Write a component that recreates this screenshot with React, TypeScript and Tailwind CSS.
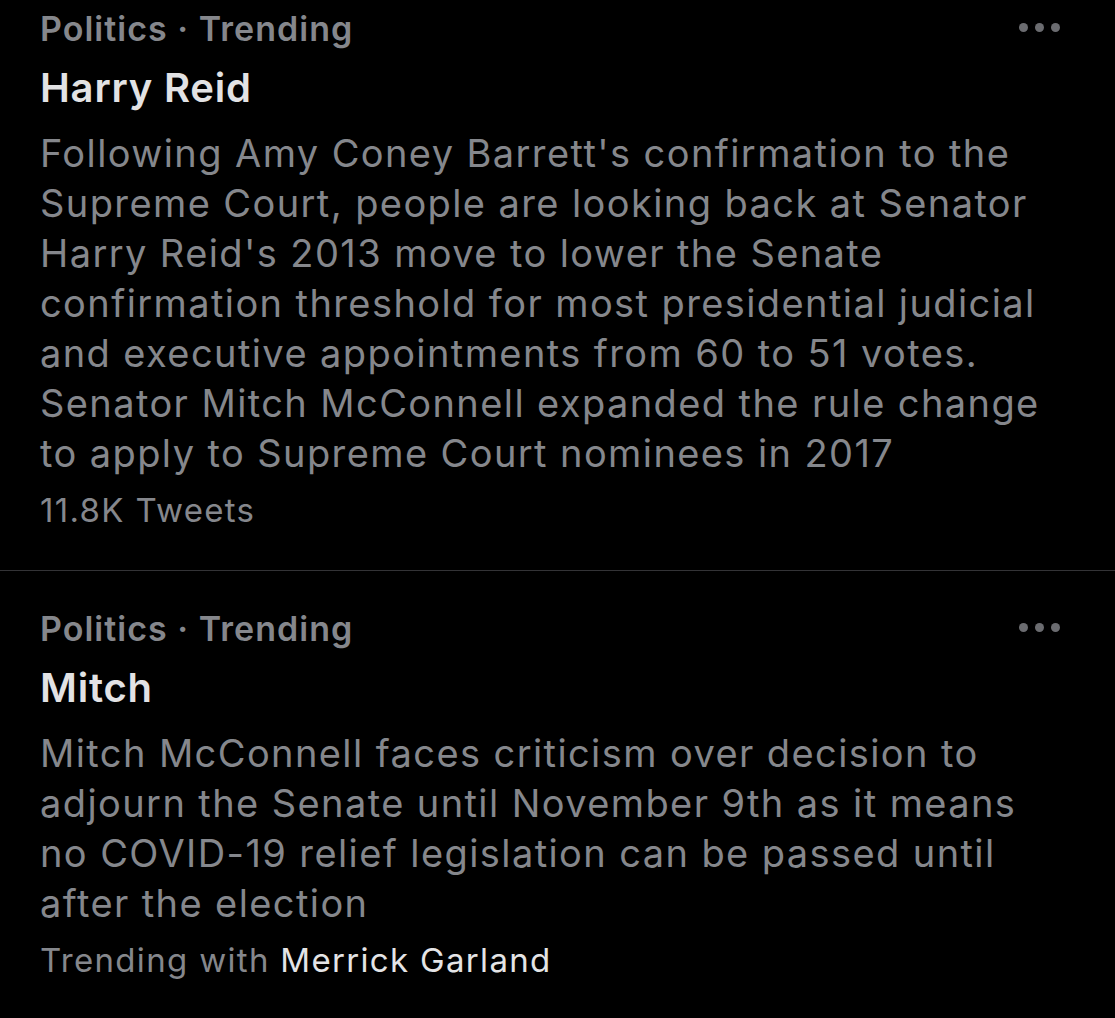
const trends = [
  {
    id: 1,
    category: "Politics · Trending",
    title: "Harry Reid",
    lines: [
      "Following Amy Coney Barrett's confirmation to the",
      "Supreme Court, people are looking back at Senator",
      "Harry Reid's 2013 move to lower the Senate",
      "confirmation threshold for most presidential judicial",
      "and executive appointments from 60 to 51 votes.",
      "Senator Mitch McConnell expanded the rule change",
      "to apply to Supreme Court nominees in 2017",
    ],
    footer: <>11.8K Tweets</>,
  },
  {
    id: 2,
    category: "Politics · Trending",
    title: "Mitch",
    lines: [
      "Mitch McConnell faces criticism over decision to",
      "adjourn the Senate until November 9th as it means",
      "no COVID-19 relief legislation can be passed until",
      "after the election",
    ],
    footer: (
      <>
        Trending with <span className="text-[#e4e4e6]">Merrick Garland</span>
      </>
    ),
  },
];

function MoreDots() {
  return (
    <div className="flex items-center gap-[7px] pt-[14px]">
      <span className="w-[9px] h-[9px] rounded-full bg-[#6b6c70]" />
      <span className="w-[9px] h-[9px] rounded-full bg-[#6b6c70]" />
      <span className="w-[9px] h-[9px] rounded-full bg-[#6b6c70]" />
    </div>
  );
}

export default function App() {
  return (
    <div
      className="w-[1115px] h-[1018px] bg-black overflow-hidden"
      style={{ fontFamily: "Inter, 'Noto Sans', sans-serif" }}
    >
      {trends.map((trend, i) => (
        <div key={trend.id}>
          {i > 0 && <div className="h-px bg-[#333336]" />}
          <div className={`pl-[40px] pr-[55px] ${i === 0 ? "pt-[9px] pb-[40px]" : "pt-[38px]"}`}>
            <div className="flex items-start justify-between">
              <div className="text-[34px] leading-[40px] font-semibold tracking-[0.03em] text-[#85878c]">
                {trend.category}
              </div>
              <MoreDots />
            </div>
            <div className="mt-[14px] text-[40px] leading-[50px] font-semibold tracking-[0.02em] text-[#e2e2e4]">
              {trend.title}
            </div>
            <div className="mt-[15px] text-[38px] leading-[50px] tracking-[0.037em] text-[#85878c]">
              {trend.lines.map((line) => (
                <div key={line} className="whitespace-nowrap">{line}</div>
              ))}
            </div>
            <div className="mt-[12px] text-[33px] leading-[40px] tracking-[0.04em] text-[#85878c]">
              {trend.footer}
            </div>
          </div>
        </div>
      ))}
    </div>
  );
}
